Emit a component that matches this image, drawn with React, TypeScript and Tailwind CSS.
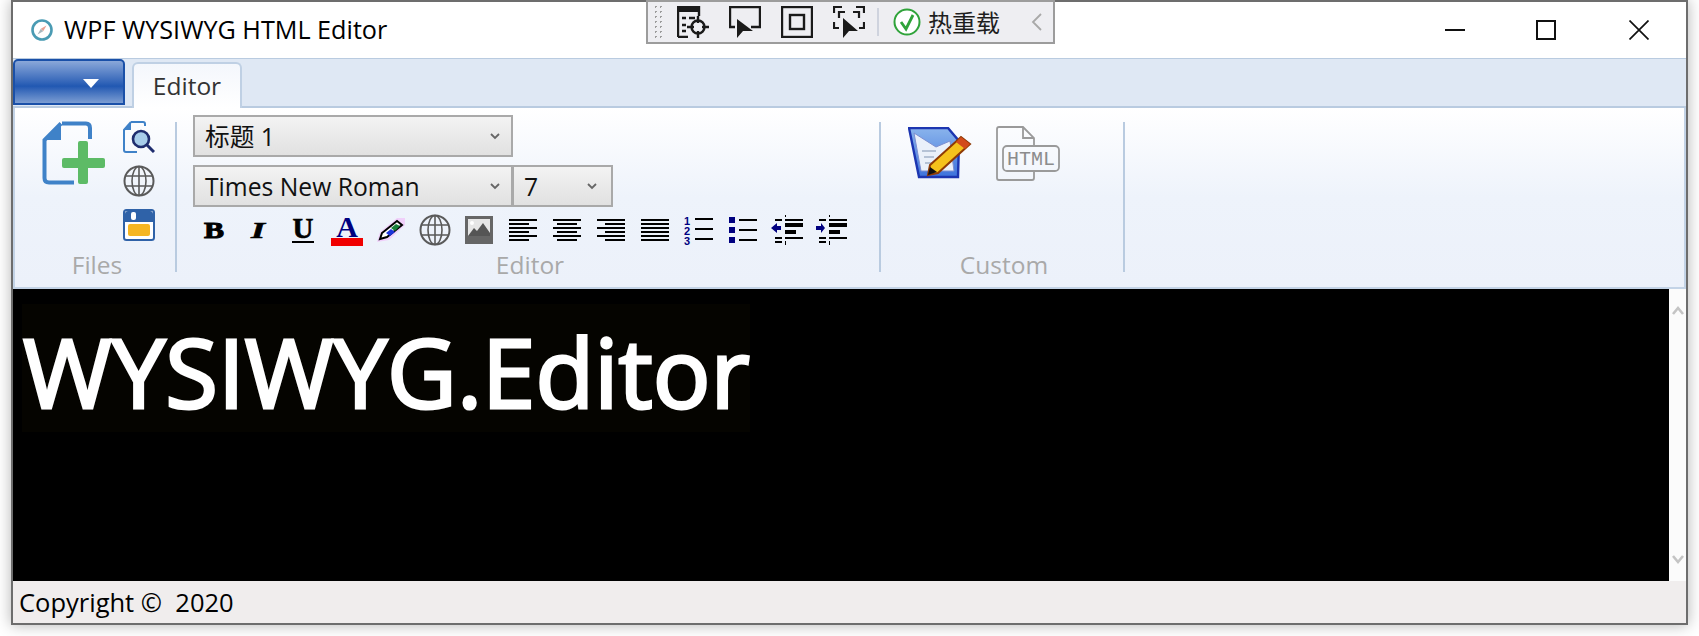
const Lines = ({ rows }: { rows: [number, number][] }) => (
  <svg width="28" height="22" viewBox="0 0 28 22" className="shrink-0">
    {rows.map(([x, w], i) => (
      <rect key={i} x={x} y={i * 4} width={w} height="2" fill="#000" />
    ))}
  </svg>
);

const Globe = ({ size = 32 }: { size?: number }) => (
  <svg width={size} height={size} viewBox="0 0 32 32" className="shrink-0" fill="none" stroke="#5a5a5a" strokeWidth="1.6">
    <circle cx="16" cy="16" r="14.5" strokeWidth="2" />
    <ellipse cx="16" cy="16" rx="7" ry="14.5" />
    <path d="M16 1.5v29M2 11h28M2 21h28" />
  </svg>
);

const Chevron = ({ up }: { up?: boolean }) => (
  <svg width="12" height="10" viewBox="0 0 12 10" fill="none" stroke="#c4c4c4" strokeWidth="2.6">
    <path d={up ? "M1 9l5-6 5 6" : "M1 1l5 6 5-6"} />
  </svg>
);

const ComboArrow = () => (
  <svg width="10" height="7" viewBox="0 0 10 7" fill="none" stroke="#666" strokeWidth="1.8">
    <path d="M1 1l4 4 4-4" />
  </svg>
);

function Combo({ label, className }: { label: string; className: string }) {
  return (
    <div className={`h-[42px] shrink-0 border-2 border-[#a9a9a9] bg-gradient-to-b from-[#f3f3f3] to-[#e1e1e1] flex items-center justify-between pl-[10px] pr-[11px] pt-px text-[24.7px] text-[#111] ${className}`}>
      <span>{label}</span>
      <ComboArrow />
    </div>
  );
}

function GroupLabel({ children }: { children: string }) {
  return <div className="mt-auto -mb-[9px] h-[32px] pl-[4px] leading-[32px] text-center text-[24.5px] text-[#a9a9a9]">{children}</div>;
}

export default function App() {
  return (
    <div className="w-[1699px] h-[636px] overflow-hidden bg-white pl-[11px] font-['Open_Sans','Noto_Sans_CJK_SC',sans-serif]">
      <div className="relative w-[1677px] h-[625px] border-2 border-[#6d6d6d] bg-white flex flex-col shadow-[0_0_14px_rgba(0,0,0,0.3)]">
        {/* Title bar */}
        <div className="h-[56px] shrink-0 flex items-center pl-[18px]">
          <svg width="22" height="22" viewBox="0 0 22 22" fill="none" className="shrink-0">
            <circle cx="11" cy="11" r="9.5" stroke="#4a9bb3" strokeWidth="2.6" />
            <path d="M15.5 6.5L12.2 12.2 9.8 9.8z" fill="#e8a090" />
            <path d="M6.5 15.5L9.8 9.8l2.4 2.4z" fill="#a9b7bd" />
          </svg>
          <span className="ml-[11px] text-[25.2px] text-black">WPF WYSIWYG HTML Editor</span>
          <div className="ml-auto flex items-center pr-[37px]">
            <svg width="20" height="20" viewBox="0 0 20 20" className="mr-[71px]"><rect x="0" y="9" width="20" height="2" fill="#111" /></svg>
            <div className="w-[20px] h-[20px] border-2 border-[#111] mr-[73px]" />
            <svg width="20" height="20" viewBox="0 0 20 20" stroke="#111" strokeWidth="1.7"><path d="M0.5 0.5l19 19M19.5 0.5l-19 19" /></svg>
          </div>
        </div>

        {/* Tabs */}
        <div className="h-[50px] shrink-0 border-t border-b-2 border-[#b9cbe0] bg-[#dfe8f4] flex items-start">
          <div className="w-[112px] h-[46px] border-2 border-[#1a50a8] rounded-t-[5px] bg-gradient-to-b from-[#8ba8d9] via-[#2158b2] via-60% to-[#7c9dd2] flex items-center justify-end pr-[24px] pt-[2px]">
            <div className="w-0 h-0 border-x-[8px] border-x-transparent border-t-[9px] border-t-white" />
          </div>
          <div className="ml-[7px] mt-[3px] w-[110px] h-[46px] border-2 border-b-0 border-[#bfd0e4] rounded-t-[6px] bg-gradient-to-b from-[#f4f7fc] to-white flex items-center justify-center text-[24.5px] text-[#333] relative">
            Editor
          </div>
        </div>

        {/* Ribbon */}
        <div className="h-[181px] shrink-0 border-x-2 border-b-2 border-[#c3d3e6] bg-gradient-to-b from-white via-[#eef3fb] via-50% to-[#ecf1fa] flex pt-[14px] pb-[15px]">
          <div className="w-[162px] h-[150px] border-r-2 border-[#b9cbe0] flex flex-col">
            <div className="flex -mt-px pl-[27px]">
              <svg width="63" height="64" viewBox="0 0 63 64" fill="none" className="shrink-0">
                <path d="M20 2.5H44Q48 2.500 48 7V18M32 61.500H7Q2.500 61.500 2.500 57V19L19 2.500" stroke="#3f82c8" strokeWidth="4" />
                <path d="M2 19H19V2z" fill="#3f82c8" />
                <rect x="36" y="20" width="10" height="43" rx="2" fill="#5dbb66" />
                <rect x="20" y="37" width="43" height="10" rx="2" fill="#5dbb66" />
              </svg>
              <div className="ml-[18px] flex flex-col gap-[12px]">
                <svg width="32" height="32" viewBox="0 0 32 32" fill="none">
                  <path d="M8 1H20Q22 1 22 3V5M14 31H3Q1 31 1 29V9L8 1" stroke="#3f82c8" strokeWidth="2" />
                  <path d="M1 9H8V1z" fill="#3f82c8" />
                  <circle cx="18" cy="18" r="8" fill="#a8cdea" stroke="#1f2d6e" strokeWidth="2.6" />
                  <path d="M24 24l7 7" stroke="#1f2d6e" strokeWidth="3" />
                </svg>
                <Globe />
                <svg width="32" height="32" viewBox="0 0 32 32">
                  <rect x="1" y="1" width="30" height="30" rx="2.500" fill="#fff" stroke="#2f62a8" strokeWidth="2" />
                  <path d="M5 2H27Q30 2 30 5V13H2V5Q2 2 5 2z" fill="#2f62a8" />
                  <rect x="8" y="3" width="5" height="8" rx="2" fill="#fff" />
                  <rect x="5" y="15" width="22" height="12" rx="2" fill="#f5b623" />
                </svg>
              </div>
            </div>
            <GroupLabel>Files</GroupLabel>
          </div>

          <div className="w-[704px] h-[150px] border-r-2 border-[#b9cbe0] flex flex-col">
            <div className="-mt-[7px] pl-[16px] flex flex-col">
              <Combo label="标题 1" className="w-[320px]" />
              <div className="flex mt-[8px]">
                <Combo label="Times New Roman" className="w-[320px]" />
                <Combo label="7" className="w-[101px] -ml-px !pr-[14px]" />
              </div>
              <div className="mt-[7px] h-[31px] flex items-center text-black font-['Liberation_Serif',serif]">
                <span className="ml-[12px] w-[18px] text-center text-[24px] leading-none font-bold scale-x-125 [-webkit-text-stroke:1px_black]">B</span>
                <span className="ml-[26px] w-[18px] text-center text-[24px] leading-none font-bold italic scale-x-150 [-webkit-text-stroke:0.6px_black]">I</span>
                <span className="ml-[25px] w-[22px] text-center text-[29px] leading-[25px] font-bold border-b-2 border-black h-[27px] [-webkit-text-stroke:0.6px_black]">U</span>
                <div className="ml-[17px] w-[32px] flex flex-col items-center h-[32px]">
                  <span className="h-[24px] text-[30px] leading-[26px] font-bold text-[#000080]">A</span>
                  <span className="w-[32px] h-[8px] bg-[#f00000]" />
                </div>
                <svg width="28" height="24" viewBox="0 0 28 24" className="ml-[14px] shrink-0">
                  <path d="M0 24L3 14 20 0H28V7L12 22z" fill="#f0d0fa" />
                  <path d="M3 21L5 15 20 3 25 7 10 19z" fill="#fff" stroke="#000" strokeWidth="2" />
                  <path d="M9 15l5-4 4 3-5 4z" fill="#1c34d8" />
                  <path d="M14 10l5-4 4 2-5 5z" fill="#17803a" />
                </svg>
                <div className="ml-[14px] shrink-0"><Globe /></div>
                <svg width="28" height="28" viewBox="0 0 28 28" className="ml-[14px] shrink-0">
                  <rect width="28" height="28" fill="#666" />
                  <rect x="3" y="3" width="22" height="17" fill="#e6e6e6" />
                  <circle cx="7" cy="7" r="2" fill="#fff" />
                  <path d="M3 20L9 12 12 15 18 7 25 17V20z" fill="#555" />
                </svg>
                <div className="ml-[16px]"><Lines rows={[[0, 28], [0, 20], [0, 28], [0, 20], [0, 28], [0, 20]]} /></div>
                <div className="ml-[16px]"><Lines rows={[[0, 28], [4, 20], [0, 28], [4, 20], [0, 28], [4, 20]]} /></div>
                <div className="ml-[16px]"><Lines rows={[[0, 28], [8, 20], [0, 28], [8, 20], [0, 28], [8, 20]]} /></div>
                <div className="ml-[16px]"><Lines rows={[[0, 28], [0, 28], [0, 28], [0, 28], [0, 28], [0, 28]]} /></div>
                <svg width="29" height="32" viewBox="0 0 29 32" className="ml-[15px] shrink-0 overflow-visible">
                  <text x="0" y="11" fontSize="11" fontWeight="700" fill="#000080" fontFamily="Liberation Sans">1</text>
                  <text x="0" y="21" fontSize="11" fontWeight="700" fill="#000080" fontFamily="Liberation Sans">2</text>
                  <text x="0" y="31" fontSize="11" fontWeight="700" fill="#000080" fontFamily="Liberation Sans">3</text>
                  <path d="M11 4h18v2H11zM11 14h18v2H11zM11 24h18v2H11z" fill="#000" />
                </svg>
                <svg width="28" height="26" viewBox="0 0 28 26" className="ml-[16px] shrink-0">
                  <path d="M0 0h6v6H0zM0 10h6v6H0zM0 20h6v6H0z" fill="#000080" />
                  <path d="M10 2h18v2H10zM10 12h18v2H10zM10 22h18v2H10z" fill="#000" />
                </svg>
                <svg width="32" height="30" viewBox="0 0 32 30" className="ml-[14px] shrink-0">
                  <path d="M14 0h1v2h-1zM14 4h1v2h-1zM14 26h1v2h-1zM14 28h1v2h-1z" fill="#000" />
                  <path d="M4 4h7v2H4zM14 4h18v2H14zM14 8h18v4H14zM14 15h11v4H14zM14 22h18v2H14zM4 22h7v2H4zM4 26h7v2H4z" fill="#000" />
                  <path d="M0 13l6-5v3h4v4H6v3z" fill="#000080" />
                </svg>
                <svg width="32" height="30" viewBox="0 0 32 30" className="ml-[12px] shrink-0">
                  <path d="M14 0h1v2h-1zM14 4h1v2h-1zM14 26h1v2h-1zM14 28h1v2h-1z" fill="#000" />
                  <path d="M4 4h7v2H4zM14 4h18v2H14zM14 8h18v4H14zM14 15h11v4H14zM14 22h18v2H14zM4 22h7v2H4zM4 26h7v2H4z" fill="#000" />
                  <path d="M10 13l-4-5v3H1v4h5v3z" fill="#000080" />
                </svg>
              </div>
            </div>
            <GroupLabel>Editor</GroupLabel>
          </div>

          <div className="w-[244px] h-[150px] border-r-2 border-[#b9cbe0] flex flex-col">
            <div className="flex pl-[27px] mt-[5px]">
              <svg width="64" height="54" viewBox="0 0 64 54" className="shrink-0">
                <defs>
                  <linearGradient id="noteTop" x1="0" y1="0" x2="0" y2="1">
                    <stop offset="0" stopColor="#8ab4ec" />
                    <stop offset="1" stopColor="#3d72dc" />
                  </linearGradient>
                </defs>
                <path d="M1 1H40L51 14 50 50H11z" fill="url(#noteTop)" stroke="#1c35b0" strokeWidth="2.400" />
                <path d="M6 6L28 20 42 14 46 44H13z" fill="#eaf0fa" stroke="#7d8fd0" strokeWidth="1" />
                <path d="M14 24h14M16 30h10M17 36h8" stroke="#b5c2d6" strokeWidth="2" />
                <path d="M22 38L53 10 62 17 30 46 20 48z" fill="#f5c21c" stroke="#8f3a05" strokeWidth="2" />
                <path d="M48 15l5-5 9 7-5 5z" fill="#d24c1c" />
                <path d="M20 48l2-8 7 5z" fill="#111" />
              </svg>
              <svg width="64" height="55" viewBox="0 0 64 55" fill="none" stroke="#9a9a9a" strokeWidth="1.800" className="ml-[24px] shrink-0 -mt-px">
                <path d="M38 19V12L27 1H3Q1 1 1 3V52Q1 54 3 54H36Q38 54 38 52V46" />
                <path d="M27 1V12H38" />
                <rect x="7" y="20" width="56" height="25" rx="4" />
                <text x="35" y="39" fontSize="20" fill="#8c8c8c" stroke="none" textAnchor="middle" fontFamily="Liberation Mono">HTML</text>
              </svg>
            </div>
            <GroupLabel>Custom</GroupLabel>
          </div>
        </div>

        {/* Document */}
        <div className="flex-1 flex bg-black min-h-0">
          <div className="flex-1 pl-[9px] pt-[15px]">
            <div className="w-[728px] h-[128px] pt-[3px] pl-[1px] bg-[#050400] text-white text-[96px] leading-[128px] whitespace-nowrap [-webkit-text-stroke:3px_white]">WYSIWYG.Editor</div>
          </div>
          <div className="w-[17px] bg-[#fbfbfb] flex flex-col items-center justify-between py-[16px]">
            <Chevron up />
            <Chevron />
          </div>
        </div>

        {/* Status bar */}
        <div className="h-[42px] shrink-0 bg-[#f0eded] pl-[6px] flex items-center text-[25.5px] text-black whitespace-pre">Copyright ©  2020</div>

        {/* Debug toolbar floating over the title bar */}
        <div className="absolute left-[633px] -top-[2px] w-[409px] h-[44px] border-2 border-[#9c9c9c] bg-[#eeeef2] flex items-center">
          <div className="ml-[5px] w-[10px] h-[36px] bg-[radial-gradient(#9c9c9c_1px,transparent_1px)] bg-[length:5px_5px]" />
          <svg width="32" height="32" viewBox="0 0 32 32" fill="none" stroke="#1a1a1a" strokeWidth="2.400" className="ml-[14px] shrink-0">
            <path d="M1 31V1H22V10" />
            <rect x="0" y="0" width="22" height="6" fill="#1a1a1a" stroke="none" />
            <path d="M1 31H11M5 12h4M12 12h6M5 19h4M5 25h4" />
            <circle cx="21" cy="21" r="6.500" />
            <path d="M21 10v7M21 25v7M10 21h7M25 21h7" />
          </svg>
          <svg width="32" height="32" viewBox="0 0 32 32" className="ml-[20px] shrink-0">
            <path d="M6 21H1V1H31V21H22" fill="none" stroke="#1a1a1a" strokeWidth="2.400" />
            <path d="M8 13V32L14 25 24 25z" fill="#1a1a1a" />
          </svg>
          <svg width="32" height="32" viewBox="0 0 32 32" fill="none" stroke="#1a1a1a" strokeWidth="2.400" className="ml-[20px] shrink-0">
            <rect x="1" y="1" width="30" height="30" />
            <rect x="9" y="9" width="14" height="14" />
          </svg>
          <svg width="32" height="32" viewBox="0 0 32 32" className="ml-[20px] shrink-0">
            <path d="M1 7V1H9M23 1H31V7M31 16V22H26M1 16V22H6M6 12V6H12M20 6H26V12" fill="none" stroke="#1a1a1a" strokeWidth="2.200" />
            <path d="M10 12V32L16 25 25 25z" fill="#1a1a1a" />
          </svg>
          <div className="ml-[12px] w-[2px] h-[28px] bg-[#cfd3de]" />
          <svg width="28" height="28" viewBox="0 0 28 28" fill="none" className="ml-[14px] shrink-0">
            <circle cx="14" cy="14" r="12.500" fill="#fff" stroke="#2fa33a" strokeWidth="2" />
            <path d="M8 14l5 7 7-14" stroke="#2fa33a" strokeWidth="2.800" />
          </svg>
          <span className="ml-[7px] text-[24px] leading-none text-[#1e1e1e] font-['Noto_Sans_CJK_SC',sans-serif]">热重载</span>
          <svg width="11" height="18" viewBox="0 0 11 18" fill="none" stroke="#a8a8a8" strokeWidth="1.800" className="ml-[31px] shrink-0">
            <path d="M10 1L2 9l8 8" />
          </svg>
        </div>
      </div>
    </div>
  );
}
